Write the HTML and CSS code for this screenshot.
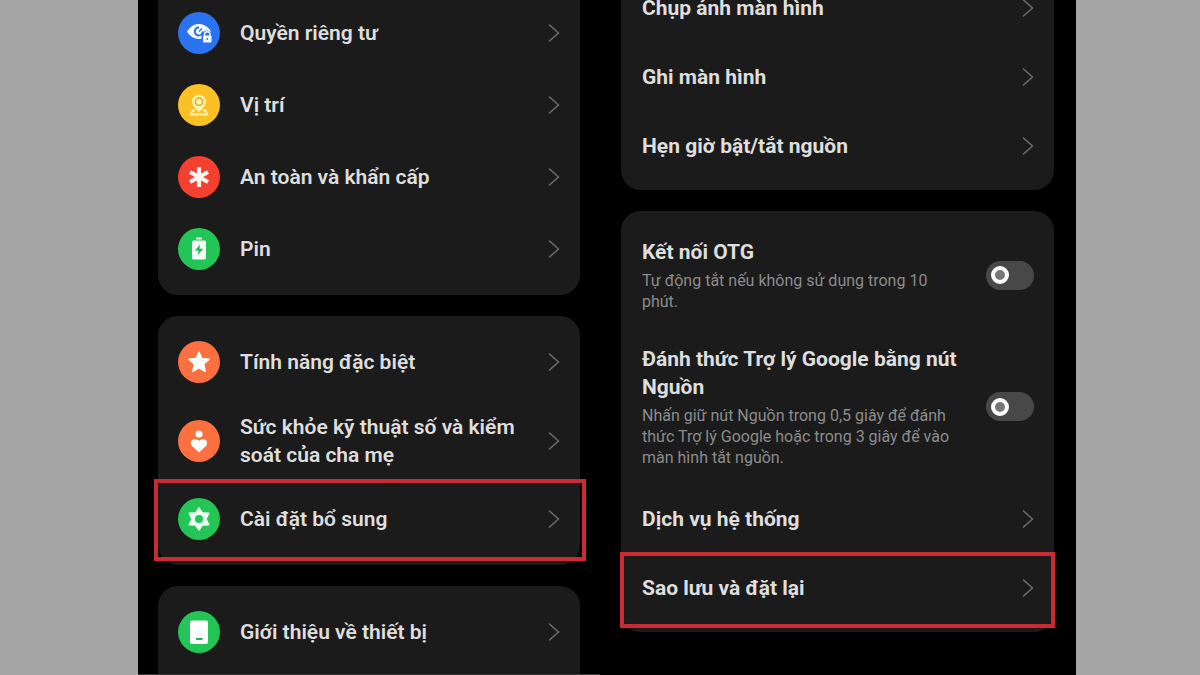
FILE: index.html
```html
<!DOCTYPE html>
<html lang="vi">
<head>
    <meta charset="UTF-8">
    <meta name="viewport" content="width=device-width, initial-scale=1.0">
    <title>Cài đặt</title>
    <link rel="stylesheet" href="styles.css">
</head>
<body>

    <svg class="defs" aria-hidden="true">
        <symbol id="chevron" viewBox="0 0 12 18">
            <path d="M1.5 1 L10.5 9 L1.5 17" fill="none" stroke="currentColor" stroke-width="1.6" stroke-linecap="round" stroke-linejoin="round"/>
        </symbol>
    </svg>

    <main class="wrap">

        <!-- main settings -->
        <div class="phone phone-left">
            <section class="card card-cut">
                <a href="#" class="row">
                    <span class="icon blue">
                        <svg viewBox="0 0 42 42">
                            <path d="M9 19.500 C13 13.500 17 12 21 12 C25.500 12 29.500 14 33 19.500 C29 25 25 27 21 27 C16.500 27 12.500 25 9 19.500 Z" fill="#f2f9ff"/>
                            <path d="M21 15.500 A4 4 0 1 0 24.800 19.500" fill="none" stroke="#2a72ee" stroke-width="2"/>
                            <path d="M21 19.500 L24 16.500" stroke="#2a72ee" stroke-width="1.200"/>
                            <path d="M23.500 32 V24 Q24.500 18.500 29 18.500 Q34.500 19.500 34.500 24 V32 Z" fill="#2a72ee"/>
                            <rect x="25" y="23.500" width="8.500" height="7" rx="1" fill="#f2f9ff"/>
                            <path d="M26.500 24 V22.500 A2.700 2.700 0 0 1 32 22.500 V24" fill="none" stroke="#f2f9ff" stroke-width="1.400"/>
                            <rect x="28.700" y="26" width="1.200" height="2" fill="#2a72ee"/>
                        </svg>
                    </span>
                    <span class="title">Quyền riêng tư</span>
                    <svg class="chevron"><use href="#chevron"/></svg>
                </a>
                <a href="#" class="row">
                    <span class="icon yellow">
                        <svg viewBox="0 0 42 42">
                            <path d="M17 26.500 H14.500 L12.800 30.500 H29.200 L27.500 26.500 H25" fill="none" stroke="#fff3b0" stroke-width="1.800"/>
                            <path d="M21 28.500 C18 25 14 21.500 14 17.700 A7 7 0 0 1 28 17.700 C28 21.500 24 25 21 28.500 Z" fill="#fff3b0"/>
                            <circle cx="21" cy="17.700" r="3.600" fill="#fff3b0" stroke="#d9ac2c" stroke-width="1.500"/>
                        </svg>
                    </span>
                    <span class="title">Vị trí</span>
                    <svg class="chevron"><use href="#chevron"/></svg>
                </a>
                <a href="#" class="row">
                    <span class="icon red">
                        <svg viewBox="0 0 42 42">
                            <path d="M21 11 V31 M12 16 L30 26 M30 16 L12 26" stroke="#fff5f2" stroke-width="4.200"/>
                        </svg>
                    </span>
                    <span class="title">An toàn và khẩn cấp</span>
                    <svg class="chevron"><use href="#chevron"/></svg>
                </a>
                <a href="#" class="row">
                    <span class="icon green">
                        <svg viewBox="0 0 42 42">
                            <rect x="18" y="9.500" width="6" height="2" rx="1" fill="#f3fff6"/>
                            <rect x="14" y="12.500" width="14" height="19" rx="1.500" fill="#f3fff6"/>
                            <path d="M22 16.500 L17 22.500 H20.500 L20 27 L25 20.800 H21.500 Z" fill="#23b651"/>
                        </svg>
                    </span>
                    <span class="title">Pin</span>
                    <svg class="chevron"><use href="#chevron"/></svg>
                </a>
            </section>

            <section class="card">
                <a href="#" class="row">
                    <span class="icon orange">
                        <svg viewBox="0 0 42 42">
                            <path d="M21 11 L23.900 17.500 L31.200 18.200 L25.700 23 L27.200 30.500 L21 26.800 L14.800 30.500 L16.300 23 L10.800 18.200 L18.100 17.500 Z" fill="#fff" stroke="#fff" stroke-width="1.400" stroke-linejoin="round"/>
                        </svg>
                    </span>
                    <span class="title">Tính năng đặc biệt</span>
                    <svg class="chevron"><use href="#chevron"/></svg>
                </a>
                <a href="#" class="row row-tall">
                    <span class="icon orange">
                        <svg viewBox="0 0 42 42">
                            <circle cx="21" cy="14" r="3.600" fill="#fff"/>
                            <path d="M21 32.500 L14 26 C12 23.500 12.800 20.500 15.300 19.500 C17.500 18.700 19.700 19.500 21 21 C22.300 19.500 24.500 18.700 26.700 19.500 C29.200 20.500 30 23.500 28 26 Z" fill="#fff"/>
                        </svg>
                    </span>
                    <span class="title">Sức khỏe kỹ thuật số và kiểm soát của cha mẹ</span>
                    <svg class="chevron"><use href="#chevron"/></svg>
                </a>
                <a href="#" class="row marked">
                    <span class="icon green">
                        <svg viewBox="0 0 42 42">
                            <path d="M21 9.500 L24.700 14.800 L31.200 15 L28.300 21 L31.200 27 L24.700 27.200 L21 32.500 L17.300 27.200 L10.800 27 L13.700 21 L10.800 15 L17.300 14.800 Z" fill="#eafff0" stroke="#eafff0" stroke-linejoin="round"/>
                            <circle cx="21" cy="21" r="4" fill="#23c556"/>
                        </svg>
                    </span>
                    <span class="title">Cài đặt bổ sung</span>
                    <svg class="chevron"><use href="#chevron"/></svg>
                </a>
            </section>

            <section class="card card-last">
                <a href="#" class="row">
                    <span class="icon green">
                        <svg viewBox="0 0 42 42">
                            <rect x="12" y="9.500" width="18" height="23.500" rx="2" fill="#fff"/>
                            <rect x="18" y="27" width="6.500" height="2" fill="#23b651"/>
                        </svg>
                    </span>
                    <span class="title">Giới thiệu về thiết bị</span>
                    <svg class="chevron"><use href="#chevron"/></svg>
                </a>
            </section>
        </div>

        <!-- additional settings -->
        <div class="phone phone-right">
            <section class="card card-cut">
                <a href="#" class="row">
                    <span class="title">Chụp ảnh màn hình</span>
                    <svg class="chevron"><use href="#chevron"/></svg>
                </a>
                <a href="#" class="row">
                    <span class="title">Ghi màn hình</span>
                    <svg class="chevron"><use href="#chevron"/></svg>
                </a>
                <a href="#" class="row">
                    <span class="title">Hẹn giờ bật/tắt nguồn</span>
                    <svg class="chevron"><use href="#chevron"/></svg>
                </a>
            </section>

            <section class="card">
                <div class="row row-switch">
                    <label for="otg" class="text">
                        <span class="title">Kết nối OTG</span>
                        <span class="desc">Tự động tắt nếu không sử dụng trong 10 phút.</span>
                    </label>
                    <input type="checkbox" role="switch" class="switch" id="otg">
                </div>
                <div class="row row-switch">
                    <label for="assistant" class="text">
                        <span class="title">Đánh thức Trợ lý Google bằng nút Nguồn</span>
                        <span class="desc">Nhấn giữ nút Nguồn trong 0,5 giây để đánh thức Trợ lý Google hoặc trong 3 giây để vào màn hình tắt nguồn.</span>
                    </label>
                    <input type="checkbox" role="switch" class="switch" id="assistant">
                </div>
                <a href="#" class="row">
                    <span class="title">Dịch vụ hệ thống</span>
                    <svg class="chevron"><use href="#chevron"/></svg>
                </a>
                <a href="#" class="row marked">
                    <span class="title">Sao lưu và đặt lại</span>
                    <svg class="chevron"><use href="#chevron"/></svg>
                </a>
            </section>
        </div>

    </main>

</body>
</html>
```

FILE: styles.css
```css
*,
*::before,
*::after {
    box-sizing: border-box;
}

body {
    margin: 0;
    background-color: #a6a6a6;
    font-family: Roboto, "Noto Sans", sans-serif;
}

.defs {
    display: none;
}

.wrap {
    display: grid;
    grid-template-columns: 462fr 476fr;
    height: 100vh;
    margin: 0 124px 0 138px;
    overflow: hidden;
    background-color: #000;
}

/* phone screens */
.phone {
    display: flex;
    flex-direction: column;
    gap: 21px;
    height: 100vh;
    overflow: hidden;
}

.phone-left {
    padding: 0 20px;
    border-bottom: 1px solid #3a3a3a;
}

.phone-right {
    padding: 0 22px 0 21px;
}

.card {
    flex-shrink: 0;
    padding: 10px 20px;
    border-radius: 20px;
    background-color: #1b1b1b;
}

/* first card is scrolled past the top edge */
.card-cut {
    padding-top: 0;
    border-radius: 0 0 20px 20px;
}

/* last card runs on below the bottom edge */
.card-last {
    flex-grow: 1;
    border-radius: 20px 20px 0 0;
}

.phone-left .card-cut {
    margin-top: -3px;
}

.phone-right .card-cut {
    margin-top: -27px;
}

.phone-right .card {
    padding-left: 21px;
}

/* rows */
.row {
    position: relative;
    display: flex;
    align-items: center;
    height: 72px;
    color: #dedede;
    text-decoration: none;
}

.phone-right .row {
    height: 69px;
}

.row-tall {
    height: 85px;
}

.phone-right .row-switch {
    height: auto;
    padding: 17px 0 16px;
}

.title {
    flex: 1;
    font-size: 21px;
    font-weight: 600;
    line-height: 28px;
}

.phone-right .title {
    font-weight: 700;
}

.row-tall .title {
    padding-right: 24px;
}

.text {
    display: flex;
    flex: 1;
    flex-direction: column;
    gap: 4px;
    padding-right: 20px;
}

.desc {
    color: #8c8c8c;
    font-size: 16px;
    line-height: 21px;
}

.chevron {
    width: 12px;
    height: 18px;
    color: #6c6c6c;
}

/* round icons */
.icon {
    width: 42px;
    height: 42px;
    margin-right: 20px;
    border-radius: 50%;
}

.icon svg {
    display: block;
}

.blue {
    background-color: #2a72ee;
}

.yellow {
    background-color: #fbc023;
}

.red {
    background-color: #f5402f;
}

.green {
    background-color: #23c556;
}

.orange {
    background-color: #fb7040;
}

/* switch */
.switch {
    display: flex;
    align-items: center;
    width: 48px;
    height: 29px;
    margin: 0;
    padding: 0 5px;
    border-radius: 15px;
    background-color: #484848;
    appearance: none;
}

.switch::before {
    content: "";
    width: 18px;
    height: 18px;
    border: 4px solid #fff;
    border-radius: 50%;
    background-color: #777;
}

.switch:checked {
    justify-content: flex-end;
    background-color: #23c556;
}

/* red frame */
.marked::after {
    content: "";
    position: absolute;
    inset: -4px -26px -6px -24px;
    border: 4px solid #ca2a34;
    pointer-events: none;
}

.phone-right .marked::after {
    inset: -1px -21px -6px -22px;
}
```
